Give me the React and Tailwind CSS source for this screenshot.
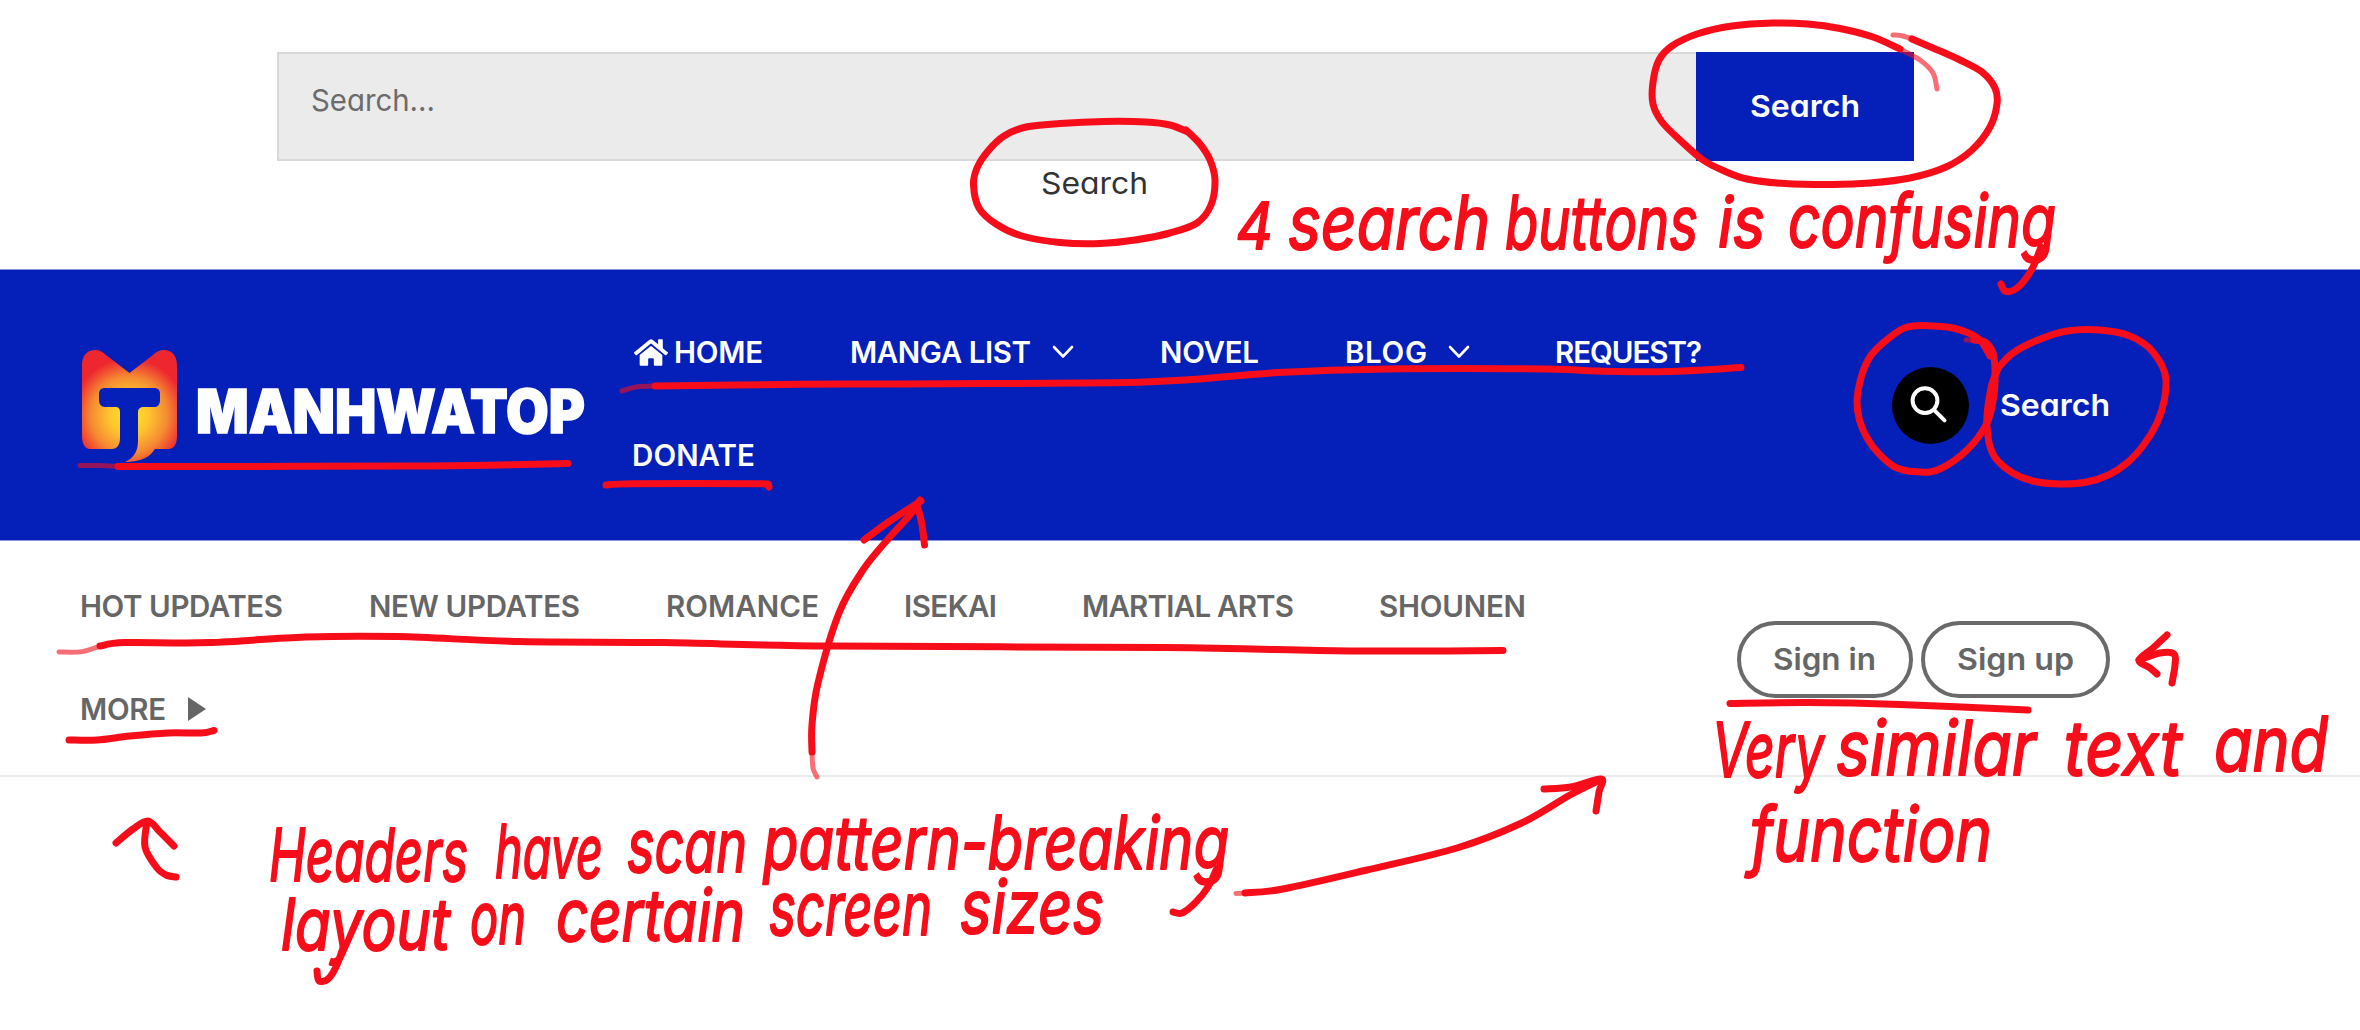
import React, { useLayoutEffect, useRef, useState } from "react";
import { FaHome } from "react-icons/fa";

/* Text fitted to a column of the given width, by tracking or by stretching. */
function Fit({ w, children, className = "", stretch = false }) {
  const ref = useRef(null);
  const [fit, setFit] = useState({});
  useLayoutEffect(() => {
    const el = ref.current;
    el.style.letterSpacing = "0px";
    el.style.transform = "none";
    const natural = el.getBoundingClientRect().width;
    const next = stretch
      ? { transform: `scaleX(${(w + 3) / natural})` }
      : { letterSpacing: (w + 3 - natural) / (children.length - 1) + "px" };
    Object.assign(el.style, next);
    setFit(next);
  }, [w, children, stretch]);
  return (
    <span className={"block shrink-0 text-left " + className} style={{ width: w }}>
      <span ref={ref} className="-ml-[2px] inline-block origin-left whitespace-nowrap" style={fit}>
        {children}
      </span>
    </span>
  );
}

function Chevron() {
  return (
    <svg className="ml-[22px] mt-[-1px] h-[14px] w-[22px] shrink-0" viewBox="0 0 22 14" fill="none" stroke="#fff" strokeWidth="2.6" strokeLinecap="round" strokeLinejoin="round">
      <path d="M2 2 L11 11.5 L20 2" />
    </svg>
  );
}

function Logo() {
  return (
    <div className="flex h-[112px] items-start">
      <svg className="h-[112px] w-[95px] shrink-0" viewBox="0 0 95 112">
        <defs>
          <radialGradient id="flame" gradientUnits="userSpaceOnUse" cx="47" cy="65" r="66">
            <stop offset="0" stopColor="#ffe32c" />
            <stop offset="0.3" stopColor="#fdc52f" />
            <stop offset="0.58" stopColor="#f58a32" />
            <stop offset="0.86" stopColor="#ed2630" />
          </radialGradient>
        </defs>
        <path
          fill="url(#flame)"
          fillRule="evenodd"
          d="M0 15 C0 5 6 0 13 0 C18 0 21 2 24 5 L47.5 23 L71 5 C74 2 77 0 82 0 C89 0 95 5 95 15 V86 C95 94 92 99 87 99 H73 C68 107 59 112 43 112 C52 108 56 101 56 91 V62 C56 59 58 57 62 57 H73 C76 57 78 54 78 50 V44 C78 40 76 38 72 38 H23 C19 38 17 40 17 44 V50 C17 54 19 57 23 57 H33 C37 57 38 59 38 62 V88 C38 95 35 99 30 99 H8 C3 99 0 94 0 86 Z"
        />
      </svg>
      <div className="ml-[21px] mt-[31px] h-[60px] text-[60px] font-black leading-[60px] text-white [-webkit-text-stroke:1.5px_#fff]">
        <Fit stretch w={386}>MANHWATOP</Fit>
      </div>
    </div>
  );
}

function PrimaryHeader() {
  return (
    <header className="flex h-[272px] border-y border-[#8994dc] bg-[#051fb9] pl-[82px] text-white">
      <div className="w-[552px] shrink-0 pt-[80px]">
        <Logo />
      </div>
      <nav className="w-[1258px] shrink-0 pt-[62px] text-[29.5px] font-semibold leading-[40px]">
        <div className="flex h-[40px] items-center">
          <FaHome className="h-[31px] w-[34px] shrink-0" />
          <Fit w={86} className="ml-[8px]">HOME</Fit>
          <Fit w={178} className="ml-[90px]">MANGA LIST</Fit>
          <Chevron />
          <Fit w={96} className="ml-[88px]">NOVEL</Fit>
          <Fit w={79} className="ml-[89px]">BLOG</Fit>
          <Chevron />
          <Fit w={144} className="ml-[87px]">REQUEST?</Fit>
        </div>
        <div className="mt-[63px] flex h-[40px] items-center">
          <Fit w={120}>DONATE</Fit>
        </div>
      </nav>
      <div className="flex h-[270px] items-center text-[30px] font-semibold">
        <button className="flex h-[77px] w-[77px] items-center justify-center rounded-full bg-black">
          <svg className="mr-[4px] h-[38px] w-[38px]" viewBox="0 0 38 38" fill="none" stroke="#fff" strokeWidth="4" strokeLinecap="round">
            <circle cx="15" cy="14.6" r="12.4" />
            <path d="M24 23.8 L34.5 34.3" />
          </svg>
        </button>
        <Fit stretch w={107} className="ml-[33px]">Search</Fit>
      </div>
    </header>
  );
}

function SecondaryHeader() {
  return (
    <div className="flex h-[236px] border-b-[2px] border-[#ebebeb] pl-[82px] text-[29.5px] font-semibold leading-[40px] text-[#666]">
      <nav className="w-[1655px] shrink-0 pt-[45px]">
        <div className="flex h-[40px]">
          <Fit w={200}>HOT UPDATES</Fit>
          <Fit w={208} className="ml-[89px]">NEW UPDATES</Fit>
          <Fit w={150} className="ml-[89px]">ROMANCE</Fit>
          <Fit w={90} className="ml-[88px]">ISEKAI</Fit>
          <Fit w={209} className="ml-[88px]">MARTIAL ARTS</Fit>
          <Fit w={144} className="ml-[88px]">SHOUNEN</Fit>
        </div>
        <div className="mt-[63px] flex h-[40px] items-center">
          <Fit w={83}>MORE</Fit>
          <svg className="ml-[23px] h-[24px] w-[18px]" viewBox="0 0 18 24">
            <path d="M0 0 L18 12 L0 24 Z" fill="#666" />
          </svg>
        </div>
      </nav>
      <div className="flex gap-[8px] pt-[80px] text-[30px]">
        <button className="flex h-[77px] w-[176px] items-center justify-center rounded-full border-[4px] border-[#6a6a6a] pb-[2px]">
          <Fit stretch w={100}>Sign in</Fit>
        </button>
        <button className="flex h-[77px] w-[189px] items-center justify-center rounded-full border-[4px] border-[#6a6a6a] pb-[2px]">
          <Fit stretch w={114}>Sign up</Fit>
        </button>
      </div>
    </div>
  );
}

function SearchBar() {
  return (
    <section className="h-[269px] pt-[52px]">
      <div className="ml-[277px] flex h-[109px] w-[1637px]">
        <div className="h-full flex-1 border-[2px] border-r-0 border-[#d8d8d8] bg-[#ebebeb] pl-[34px] pt-[26px] text-[30px] leading-[40px] text-[#6b6b6b]">
          <Fit stretch w={121}>Search...</Fit>
        </div>
        <button className="flex h-full w-[218px] items-center justify-center bg-[#051fb9] text-[30px] font-semibold text-white">
          <Fit stretch w={107}>Search</Fit>
        </button>
      </div>
      <div className="ml-[277px] mt-[2px] flex w-[1635px] justify-center text-[30px] leading-[40px] text-[#333]">
        <Fit stretch w={104}>Search</Fit>
      </div>
    </section>
  );
}

/* Smooth pen stroke through a list of points. */
function smooth(p) {
  let d = `M${p[0][0]} ${p[0][1]}`;
  for (let i = 0; i < p.length - 1; i++) {
    const a = p[i - 1] || p[i];
    const b = p[i];
    const c = p[i + 1];
    const e = p[i + 2] || c;
    d += ` C${b[0] + (c[0] - a[0]) / 6} ${b[1] + (c[1] - a[1]) / 6} ${c[0] - (e[0] - b[0]) / 6} ${c[1] - (e[1] - b[1]) / 6} ${c[0]} ${c[1]}`;
  }
  return d;
}

const STROKES = [
  [[1912, 39], [1933, 48], [1960, 60], [1982, 72], [1995, 88], [1997, 104], [1990, 127], [1972, 150], [1946, 167], [1910, 178], [1870, 183], [1833, 184.5], [1785, 183.5], [1747, 179], [1722, 170], [1703, 160], [1682, 142], [1662, 122], [1653, 104], [1653, 82], [1659, 60], [1672, 46], [1697, 34], [1732, 26], [1773, 23], [1808, 24], [1840, 28.5], [1873, 37], [1900, 49]],
  [[1186, 130], [1200, 144], [1210, 160], [1215, 180], [1211, 205], [1197, 223], [1170, 233], [1135, 240], [1100, 243.5], [1060, 242.5], [1022, 236], [996, 224], [979, 208], [973.5, 185], [977, 168], [988, 151], [1004, 136], [1026, 127], [1060, 123.5], [1104, 121.5], [1146, 122], [1170, 125], [1188, 132]],
  [[1974, 340], [1985, 342], [1993, 353], [1995, 370], [1994, 395], [1987, 423], [1967, 450], [1940, 469], [1920, 472], [1893, 466], [1867, 438], [1857, 402], [1868, 360], [1893, 335], [1913, 326], [1947, 327], [1966, 332], [1980, 340], [1990, 356]],
  [[1999, 367], [2013, 353], [2038, 340], [2067, 331], [2100, 330], [2130, 336], [2153, 352], [2166, 380], [2157, 423], [2127, 463], [2087, 482], [2033, 481], [1997, 460], [1987, 427], [1991, 388], [1999, 367]],
  [[118, 466.5], [189, 466.6], [408, 466], [500, 465], [568, 463.5]],
  [[655, 386], [800, 384.3], [902, 384], [1080, 383], [1144, 382], [1200, 379], [1278, 372.6], [1387, 369], [1546, 369], [1597, 371], [1667, 371.6], [1741, 367.6]],
  [[606, 485], [633, 483.7], [755, 483.7], [767, 485], [769, 487]],
  [[812, 752], [812, 725], [818, 683], [839, 613], [863, 570], [889, 538], [910, 515], [920, 500]],
  [[921, 501], [890, 521], [864, 540]],
  [[918, 508], [922, 525], [924.5, 545]],
  [[100, 646], [125, 642.6], [209, 642.6], [306, 637], [398, 636.6], [520, 641.6], [663, 642.6], [831, 646], [1166, 647.6], [1349, 651], [1503, 650.5]],
  [[69, 740], [97, 740], [130, 736], [168, 733], [201.5, 733], [214, 730.5]],
  [[1730, 703.5], [1809, 702.6], [1900, 704.5], [2028, 710]],
  [[2167, 635], [2153, 648], [2139, 660], [2150, 668], [2157, 674]],
  [[2139, 660], [2160, 653], [2174, 654], [2175, 665], [2172, 683]],
  [[1245, 893], [1283, 889], [1367, 870], [1457, 848], [1521.6, 823], [1570, 795], [1600, 780]],
  [[1544, 789], [1571, 787], [1601, 779], [1599, 792], [1596, 811]],
  [[116, 843], [133, 829], [148, 821], [160, 832], [174, 846]],
  [[147, 822], [145, 847], [157, 868], [166, 875], [176, 877]],
  /* long pen tails below the notes */
  [[2041, 247], [2033, 267], [2024, 281], [2014, 290], [2005, 291], [2001, 284]],
  [[1217, 868], [1208, 887], [1195, 903], [1182, 913], [1173, 912]],
  [[343, 948], [336, 967], [328, 979], [319, 981], [317, 971]],
];

const FADED = [
  [[1893, 35], [1903, 36], [1914, 40]],
  [[1899, 48.5], [1920, 60], [1933, 73], [1937, 89]],
  [[80, 465.5], [98, 465.5], [120, 466.5]],
  [[622, 391], [636, 387], [657, 386]],
  [[817, 777], [813, 768], [812, 750]],
  [[59, 652], [82, 651.6], [103, 645]],
  [[1236, 893.5], [1247, 893]],
  [[1966, 340], [1976, 340]],
];

/* [text, left, baseline, width, size] */
const WORDS = [
  ["4", 1236, 249, 37, 64],
  ["search", 1288, 249, 202, 74],
  ["buttons", 1505, 249, 193, 74],
  ["is", 1718, 247, 47, 70],
  ["confusing", 1788, 247, 268, 74],
  ["Headers", 269, 881, 199, 73],
  ["have", 495, 878, 108, 74],
  ["scan", 627, 872, 120, 74],
  ["pattern-breaking", 763, 869, 466, 74],
  ["layout", 281, 950, 169, 72],
  ["on", 470, 944, 56, 72],
  ["certain", 556, 941, 189, 72],
  ["screen", 769, 935, 163, 74],
  ["sizes", 960, 933, 144, 74],
  ["Very", 1712, 777, 112, 76],
  ["similar", 1836, 775, 200, 76],
  ["text", 2064, 775, 118, 76],
  ["and", 2214, 771, 114, 76],
  ["function", 1750, 861, 242, 76],
];

function Annotations() {
  return (
    <svg className="pointer-events-none absolute left-0 top-0 h-[1030px] w-[2360px]" viewBox="0 0 2360 1030" fill="none" stroke="#f70d1a" strokeLinecap="round" strokeLinejoin="round">
      <g strokeWidth="7">
        {STROKES.map((s, i) => (
          <path key={i} d={smooth(s)} />
        ))}
      </g>
      <g strokeWidth="5" opacity="0.6">
        {FADED.map((s, i) => (
          <path key={i} d={smooth(s)} />
        ))}
      </g>
      <g className="italic" fill="#f70d1a" strokeWidth="2" fontWeight="400">
        {WORDS.map(([t, x, y, w, size], i) => (
          <text key={i} x={x} y={y} fontSize={size} textLength={w} lengthAdjust="spacingAndGlyphs">
            {t}
          </text>
        ))}
      </g>
    </svg>
  );
}

export default function App() {
  return (
    <main className="relative h-[1030px] w-[2360px] overflow-hidden bg-white font-['Inter',sans-serif] [font-feature-settings:'cv11']">
      <SearchBar />
      <PrimaryHeader />
      <SecondaryHeader />
      <Annotations />
    </main>
  );
}
